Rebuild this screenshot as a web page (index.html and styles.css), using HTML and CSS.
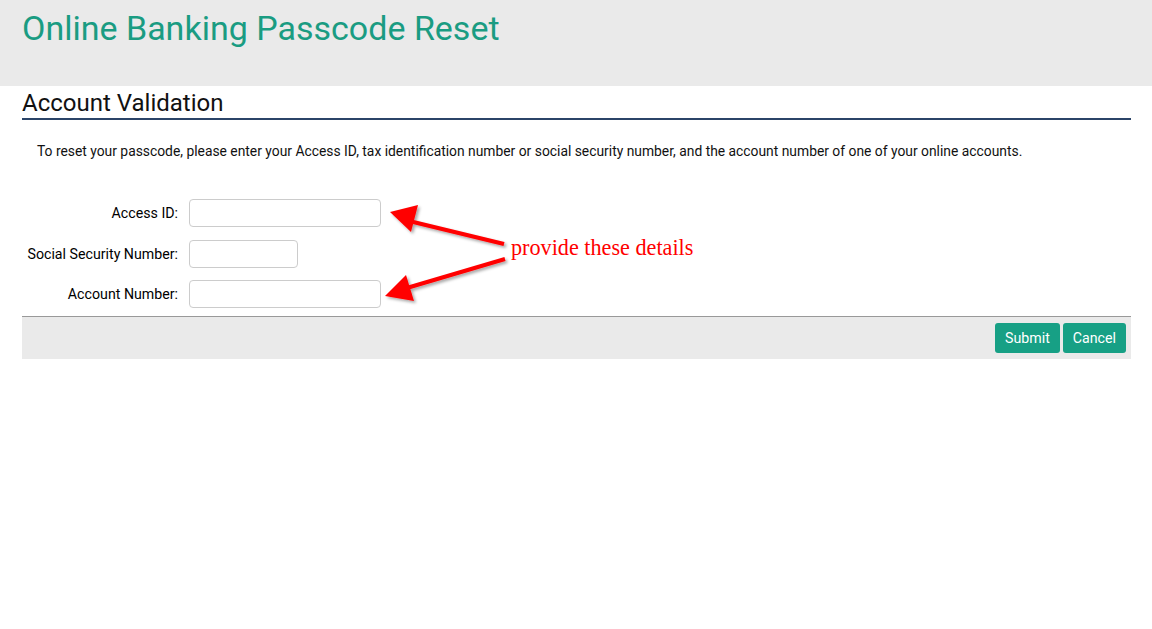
FILE: index.html
```html
<!DOCTYPE html>
<html lang="en">
<head>
    <meta charset="UTF-8">
    <meta name="viewport" content="width=device-width, initial-scale=1.0">
    <title>Online Banking Passcode Reset</title>
    <link rel="stylesheet" href="styles.css">
</head>
<body>
    <div class="header">
        <h1>Online Banking Passcode Reset</h1>
    </div>
    <div class="container">
        <h2>Account Validation</h2>
        <p class="intro">To reset your passcode, please enter your Access ID, tax identification number or social security number, and the account number of one of your online accounts.</p>
        <form class="form">
            <div class="row">
                <label for="accessId">Access ID:</label>
                <input type="text" id="accessId" class="wide">
            </div>
            <div class="row">
                <label for="ssn">Social Security Number:</label>
                <input type="text" id="ssn" class="short">
            </div>
            <div class="row">
                <label for="account">Account Number:</label>
                <input type="text" id="account" class="wide">
            </div>
            <div class="actions">
                <button type="submit">Submit</button>
                <button type="button">Cancel</button>
            </div>
        </form>
        <div class="note">
            <svg width="330" height="120" viewBox="0 0 330 120">
                <defs>
                    <filter id="shadow" x="-10%" y="-30%" width="130%" height="160%">
                        <feDropShadow dx="2" dy="2" stdDeviation="1.5" flood-color="#000" flood-opacity="0.35"/>
                    </filter>
                </defs>
                <g filter="url(#shadow)" fill="#f00" stroke="#f00">
                    <line x1="134" y1="50" x2="35" y2="26" stroke-width="4"/>
                    <polygon points="20,18 48,11 41,38" stroke="none"/>
                    <line x1="135" y1="65" x2="30" y2="96" stroke-width="4"/>
                    <polygon points="15,102 36,81 44,107" stroke="none"/>
                </g>
            </svg>
            <span>provide these details</span>
        </div>
    </div>
</body>
</html>
```

FILE: styles.css
```css
body {
    font-family: Roboto, "Liberation Sans", Arial, sans-serif;
    margin: 0;
    padding: 0;
    color: #111;
    background: #fff;
}
.header {
    background-color: #eaeaea;
    height: 86px;
    padding: 0 22px;
    box-sizing: border-box;
}
.header h1 {
    margin: 0;
    padding-top: 8px;
    font-size: 34px;
    font-weight: 400;
    color: #1a9c82;
}
.container {
    position: relative;
    margin: 0 21px 0 22px;
}
.container h2 {
    margin: 0;
    padding-top: 4px;
    padding-bottom: 2px;
    font-size: 24px;
    font-weight: 400;
    line-height: 26px;
    color: #111;
    border-bottom: 2px solid #2b4468;
}
.intro {
    margin: 21px 0 0 15px;
    font-size: 13.85px;
    line-height: 20px;
}
.form {
    margin-top: 38px;
}
.row {
    display: flex;
    align-items: center;
    height: 28px;
    margin-bottom: 12.5px;
}
.row label {
    width: 156px;
    text-align: right;
    font-size: 14.2px;
    color: #000;
    margin-right: 11px;
}
.row input {
    height: 28px;
    box-sizing: border-box;
    border: 1px solid #ccc;
    border-radius: 4px;
    padding: 4px 8px;
    font-size: 13px;
}
.row input.wide {
    width: 192px;
}
.row input.short {
    width: 109px;
}
.actions {
    display: flex;
    justify-content: flex-end;
    gap: 3px;
    margin-top: -5px;
    background-color: #eaeaea;
    border-top: 1px solid #999;
    padding: 6px 5px 6px 0;
}
.actions button {
    background-color: #17a085;
    color: white;
    border: none;
    border-radius: 3px;
    height: 30px;
    padding: 0 10px;
    font-family: Roboto, "Liberation Sans", Arial, sans-serif;
    font-size: 14.2px;
    cursor: pointer;
}
.note {
    position: absolute;
    left: 348px;
    top: 108px;
    width: 360px;
    height: 120px;
}
.note svg {
    position: absolute;
    left: 0;
    top: 0;
}
.note span {
    position: absolute;
    left: 141px;
    top: 41px;
    font-family: "Liberation Serif", "Times New Roman", serif;
    font-size: 22.2px;
    color: #f00;
    white-space: nowrap;
}
```
